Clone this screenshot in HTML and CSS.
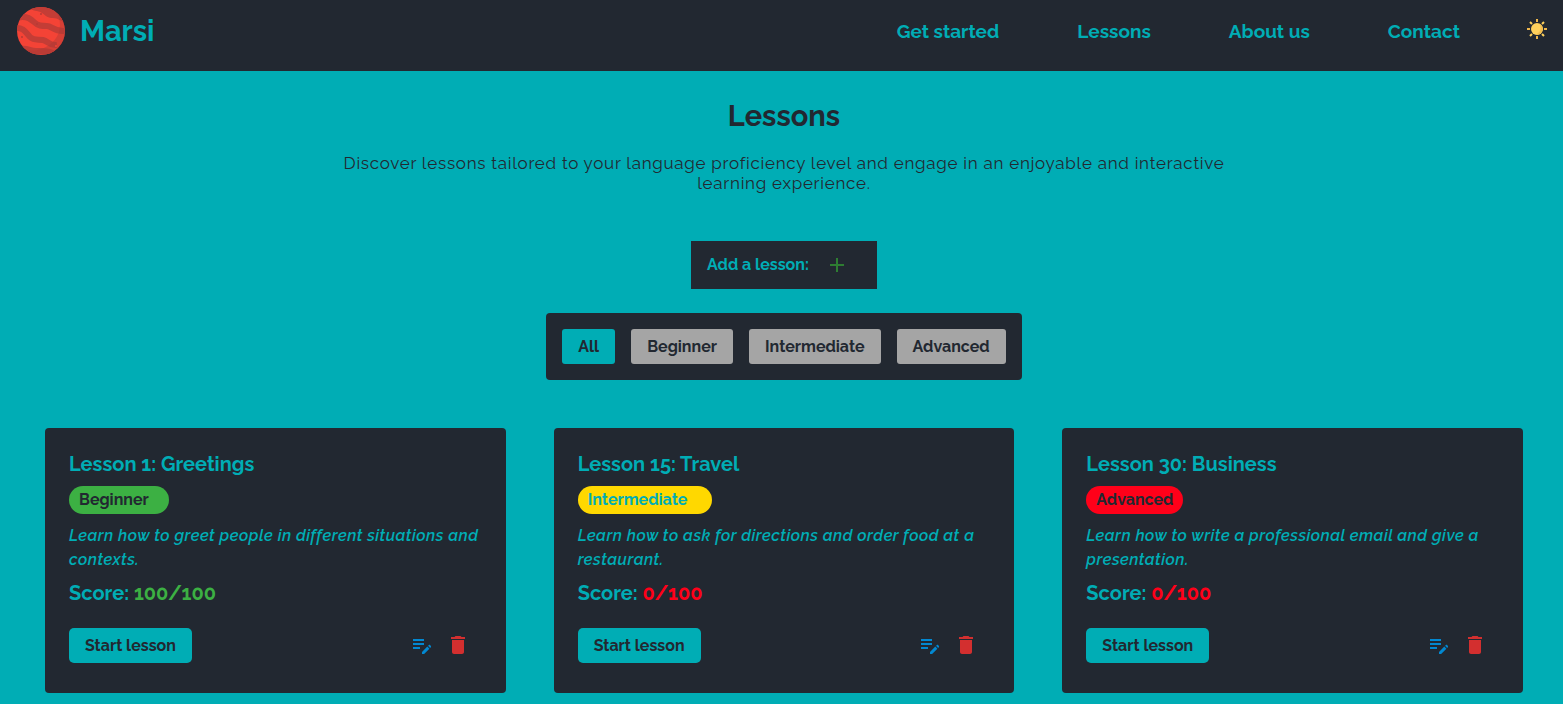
FILE: index.html
```html
<!DOCTYPE html>
<html lang="en">
<head>
<meta charset="utf-8">
<meta name="viewport" content="width=device-width, initial-scale=1">
<title>Marsi - Lessons</title>
<link rel="stylesheet" href="styles.css">
</head>
<body>
<svg class="sprite" aria-hidden="true">
  <symbol id="icon-edit" viewBox="0 0 24 24"><path d="M3 10h11v2H3zm0-2h11V6H3zm0 8h7v-2H3zm15.010-3.130.71-.71c.39-.39 1.020-.39 1.410 0l.71.71c.39.39.39 1.020 0 1.410l-.71.71zm-.71.71-5.300 5.300V21h2.120l5.300-5.300z"/></symbol>
  <symbol id="icon-delete" viewBox="0 0 24 24"><path d="M6 19c0 1.100.9 2 2 2h8c1.100 0 2-.9 2-2V7H6zM19 4h-3.500l-1-1h-5l-1 1H5v2h14z"/></symbol>
</svg>

<header class="site-header">
  <a class="brand" href="#">
    <svg class="brand-logo" viewBox="0 0 48 48" aria-hidden="true">
      <defs><clipPath id="planet"><circle cx="24" cy="24" r="24"/></clipPath></defs>
      <g clip-path="url(#planet)">
        <path fill="#f44336" d="M0 0h48v48H0z"/>
        <path fill="#c33d36" d="M12 0c3 5 9 3 13 6s6 5 11 5 7 3 12 4V0z"/>
        <g fill="none" stroke="#c33d36" stroke-width="6">
          <path d="M0 11c8-3 13 0 17 4s8 4 13 4 7 6 18 5"/>
          <path d="M-2 21c9-1 11 5 15 9s8 2 13 3 7 6 14 5"/>
          <path d="M4 42c7-1 9 2 15 2s11-1 20 3"/>
        </g>
        <path fill="#aa3934" fill-opacity=".4" d="M39 4c10 18 0 33-15 38-6 2-11 2-16 0l5 6h35V4z"/>
        <g fill="#b83a35"><circle cx="24" cy="7" r="1"/><circle cx="20" cy="17" r="1"/><circle cx="5" cy="30" r="1"/></g>
        <circle cx="39" cy="39" r="1" fill="#f44336"/>
      </g>
    </svg>
    <span>Marsi</span>
  </a>
  <nav class="site-nav" aria-label="Main">
    <a href="#">Get started</a>
    <a href="#">Lessons</a>
    <a href="#">About us</a>
    <a href="#">Contact</a>
  </nav>
  <button class="theme-toggle" type="button" aria-label="Switch theme">
    <svg viewBox="0 0 20 20" aria-hidden="true">
      <circle cx="10" cy="10" r="6" fill="#ffd15c"/>
      <path fill="#f2bd4e" d="M12 4.400A6 6 0 0 1 8 15.700a7 7 0 0 0 4-11.300z"/>
      <path stroke="#efb84c" stroke-width="2" d="M10 0v3M10 17v3M0 10h3M17 10h3"/>
      <path stroke="#ffd15c" stroke-width="2" d="m3 3 2 2M15 15l2 2M3 17l2-2M15 5l2-2"/>
    </svg>
  </button>
</header>

<main class="page">
  <h1 class="page-title">Lessons</h1>
  <p class="page-intro">Discover lessons tailored to your language proficiency level and engage in an enjoyable and interactive learning experience.</p>

  <div class="add-lesson">
    <span id="add-label">Add a lesson:</span>
    <button class="icon-button add" type="button" aria-labelledby="add-label">
      <svg viewBox="0 0 24 24" aria-hidden="true"><path d="M19 13h-6v6h-2v-6H5v-2h6V5h2v6h6z"/></svg>
    </button>
  </div>

  <div class="filters" role="group" aria-label="Filter by level">
    <button class="filter active" type="button" aria-pressed="true">All</button>
    <button class="filter" type="button" aria-pressed="false">Beginner</button>
    <button class="filter" type="button" aria-pressed="false">Intermediate</button>
    <button class="filter" type="button" aria-pressed="false">Advanced</button>
  </div>

  <section class="cards" aria-label="Lesson list">
    <article class="card">
      <h2 class="card-title">Lesson 1: Greetings</h2>
      <span class="level beginner">Beginner</span>
      <p class="card-text">Learn how to greet people in different situations and contexts.</p>
      <p class="score">Score: <strong class="full">100/100</strong></p>
      <div class="card-footer">
        <button class="start" type="button">Start lesson</button>
        <div class="card-tools">
          <button class="icon-button edit" type="button" aria-label="Edit lesson"><svg aria-hidden="true"><use href="#icon-edit"/></svg></button>
          <button class="icon-button delete" type="button" aria-label="Delete lesson"><svg aria-hidden="true"><use href="#icon-delete"/></svg></button>
        </div>
      </div>
    </article>
    <article class="card">
      <h2 class="card-title">Lesson 15: Travel</h2>
      <span class="level intermediate">Intermediate</span>
      <p class="card-text">Learn how to ask for directions and order food at a restaurant.</p>
      <p class="score">Score: <strong class="none">0/100</strong></p>
      <div class="card-footer">
        <button class="start" type="button">Start lesson</button>
        <div class="card-tools">
          <button class="icon-button edit" type="button" aria-label="Edit lesson"><svg aria-hidden="true"><use href="#icon-edit"/></svg></button>
          <button class="icon-button delete" type="button" aria-label="Delete lesson"><svg aria-hidden="true"><use href="#icon-delete"/></svg></button>
        </div>
      </div>
    </article>
    <article class="card">
      <h2 class="card-title">Lesson 30: Business</h2>
      <span class="level advanced">Advanced</span>
      <p class="card-text">Learn how to write a professional email and give a presentation.</p>
      <p class="score">Score: <strong class="none">0/100</strong></p>
      <div class="card-footer">
        <button class="start" type="button">Start lesson</button>
        <div class="card-tools">
          <button class="icon-button edit" type="button" aria-label="Edit lesson"><svg aria-hidden="true"><use href="#icon-edit"/></svg></button>
          <button class="icon-button delete" type="button" aria-label="Delete lesson"><svg aria-hidden="true"><use href="#icon-delete"/></svg></button>
        </div>
      </div>
    </article>
  </section>
</main>
</body>
</html>
```
FILE: styles.css
```css
:root {
  --dark: #222831;
  --teal: #00adb5;
  --green: #3cb043;
  --red: #ff0019;
}

* { box-sizing: border-box; }

body {
  margin: 0;
  background: var(--teal);
  color: var(--dark);
  font-family: Raleway, Lato, sans-serif;
  font-size: 16px;
  font-weight: 700;
  line-height: 24px;
}

button { font: inherit; color: inherit; border: 0; cursor: pointer; }
h1, h2, p { margin: 0; }
.sprite { display: none; }

.site-header {
  display: flex;
  align-items: flex-start;
  padding: 7px 16px 16px 17px;
  background: var(--dark);
  color: var(--teal);
}

.site-header a { color: inherit; text-decoration: none; }

.brand {
  display: flex;
  align-items: center;
  gap: 15px;
  margin-right: auto;
  font-size: 29px;
  line-height: 48px;
}

.brand-logo { width: 48px; height: 48px; }

.site-nav {
  display: flex;
  gap: 78px;
  font-size: 19px;
  line-height: 48px;
}

.theme-toggle { margin: 12px 0 0 67px; padding: 0; background: none; }
.theme-toggle svg { display: block; width: 20px; height: 20px; }

.page {
  display: flex;
  flex-direction: column;
  align-items: center;
  padding: 29px 40px 24px 45px;
}

.page-title { font-size: 29px; line-height: 32px; }

.page-intro {
  max-width: 900px;
  margin-top: 21px;
  font-size: 17px;
  font-weight: 400;
  line-height: 20px;
  letter-spacing: 0.043em;
  text-align: center;
}

.add-lesson {
  display: flex;
  align-items: center;
  gap: 16px;
  margin-top: 48px;
  padding: 12px 28px 12px 16px;
  background: var(--dark);
  color: var(--teal);
}

.icon-button { padding: 0; background: none; }
.icon-button svg { display: block; width: 24px; height: 24px; fill: currentColor; }
.add { color: #2e7d32; }
.edit { color: #0288d1; }
.delete { color: #d32f2f; }

.filters {
  display: flex;
  flex-wrap: wrap;
  gap: 16px;
  margin-top: 24px;
  padding: 16px;
  border-radius: 4px;
  background: var(--dark);
}

.filter {
  padding: 6px 16px 5px;
  border-radius: 3px;
  background: #a5a5a5;
}

.filter.active { background: var(--teal); }

.cards {
  display: grid;
  grid-template-columns: repeat(3, minmax(0, 1fr));
  gap: 48px;
  width: 100%;
  margin-top: 48px;
}

.card {
  display: flex;
  flex-direction: column;
  align-items: flex-start;
  padding: 24px 24px 30px;
  border-radius: 4px;
  background: var(--dark);
  color: var(--teal);
}

.card-title { font-size: 20px; font-weight: 700; line-height: 24px; }

.level {
  margin-top: 10px;
  padding: 2px 10px;
  border-radius: 14px;
  color: var(--dark);
}

.beginner { padding-right: 20px; background: var(--green); }
.intermediate { padding-right: 25px; background: #ffd800; color: var(--teal); }
.advanced { background: var(--red); }

.card-text {
  margin-top: 10px;
  font-weight: 600;
  font-style: italic;
  letter-spacing: 0.03em;
}

.score { margin-top: 9px; font-size: 20px; }
.score strong { font-weight: 700; }
.full { color: var(--green); }
.none { color: var(--red); }

.card-footer {
  display: flex;
  justify-content: space-between;
  align-items: flex-start;
  width: 100%;
  margin-top: 23px;
}

.start {
  padding: 6px 16px 5px;
  border-radius: 5px;
  background: var(--teal);
  color: var(--dark);
}

.card-tools { display: flex; gap: 12px; padding: 5px 12px 0 0; }
```
